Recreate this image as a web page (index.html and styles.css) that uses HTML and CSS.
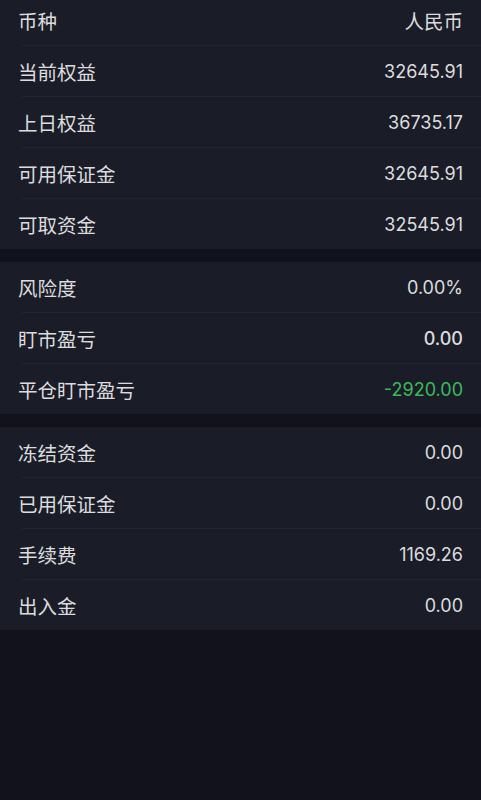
FILE: index.html
```html
<!DOCTYPE html>
<html lang="zh-CN">
<head>
<meta charset="utf-8">
<title>资金详情</title>
<link rel="stylesheet" href="styles.css">
</head>
<body>
<main class="page">
  <section class="group group-first">
    <div class="row"><span class="label">币种</span><span class="value cjk">人民币</span></div>
    <div class="row"><span class="label">当前权益</span><span class="value">32645.91</span></div>
    <div class="row"><span class="label">上日权益</span><span class="value">36735.17</span></div>
    <div class="row"><span class="label">可用保证金</span><span class="value">32645.91</span></div>
    <div class="row"><span class="label">可取资金</span><span class="value">32545.91</span></div>
  </section>
  <section class="group">
    <div class="row"><span class="label">风险度</span><span class="value">0.00%</span></div>
    <div class="row"><span class="label">盯市盈亏</span><span class="value bold">0.00</span></div>
    <div class="row"><span class="label">平仓盯市盈亏</span><span class="value green">-2920.00</span></div>
  </section>
  <section class="group">
    <div class="row"><span class="label">冻结资金</span><span class="value">0.00</span></div>
    <div class="row"><span class="label">已用保证金</span><span class="value">0.00</span></div>
    <div class="row"><span class="label">手续费</span><span class="value">1169.26</span></div>
    <div class="row"><span class="label">出入金</span><span class="value">0.00</span></div>
  </section>
</main>
</body>
</html>
```

FILE: styles.css
```css
html, body {
  margin: 0;
  padding: 0;
  background: #11121b;
}
body {
  width: 481px;
  height: 800px;
  overflow: hidden;
  font-family: Inter, "Noto Sans CJK SC", sans-serif;
  color: #dcdcdf;
}
.page {
  display: flex;
  flex-direction: column;
  gap: 13px;
}
.group {
  background: #1a1d27;
  display: flex;
  flex-direction: column;
}
.group-first {
  margin-top: -5px;
}
.row {
  height: 50px;
  display: flex;
  align-items: center;
  justify-content: space-between;
  padding: 0 18px 0 18px;
  position: relative;
}
.row + .row {
  margin-top: 1px;
}
.row + .row::before {
  content: "";
  position: absolute;
  left: 22px;
  right: 0;
  top: -1px;
  height: 1px;
  background: #222631;
}
.label {
  font-family: "Noto Sans CJK SC", sans-serif;
  font-size: 19.5px;
}
.value {
  font-size: 18px;
  font-family: Inter, "Noto Sans CJK SC", sans-serif;
}
.value.cjk {
  font-family: "Noto Sans CJK SC", sans-serif;
  font-size: 19.5px;
}
.bold {
  font-weight: 500;
}
.green {
  color: #3cb95c;
}
```
